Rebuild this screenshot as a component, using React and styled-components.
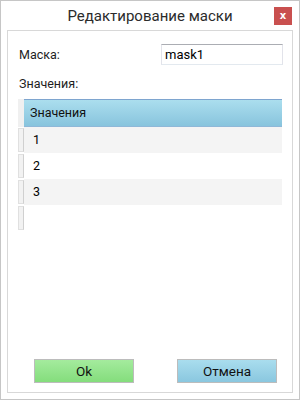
import React from 'react';
import styled, { createGlobalStyle } from 'styled-components';

const GlobalStyle = createGlobalStyle`
  html, body {
    margin: 0;
    padding: 0;
    background: #ffffff;
  }
  body {
    font-family: Roboto, "Noto Sans", sans-serif;
    color: #1e1e1e;
  }
`;

const Window = styled.div`
  box-sizing: border-box;
  width: 300px;
  height: 400px;
  border: 1px solid #c6c6c6;
  background: #ffffff;
  display: flex;
  flex-direction: column;
`;

const TitleBar = styled.div`
  height: 29px;
  display: grid;
  grid-template-columns: 1fr auto 1fr;
  align-items: center;
`;

const Title = styled.div`
  grid-column: 2;
  font-size: 15px;
  color: #2b2b2b;
`;

const CloseButton = styled.div`
  grid-column: 3;
  justify-self: end;
  margin-right: 7px;
  width: 18px;
  height: 18px;
  background: #c9504f;
  color: #ffffff;
  font-family: "DejaVu Sans", sans-serif;
  font-weight: bold;
  font-size: 10px;
  line-height: 18px;
  text-align: center;
`;

const Panel = styled.div`
  flex: 1;
  margin: 0 6px 6px;
  border: 1px solid #d8d8d8;
  display: flex;
  flex-direction: column;
  padding: 13px 9px 9px 10px;
`;

const FieldRow = styled.div`
  display: flex;
  justify-content: space-between;
  align-items: center;
`;

const Label = styled.div`
  font-size: 12.5px;
  padding-left: 1px;
  margin-top: ${p => p.$top || 0}px;
`;

const TextBox = styled.div`
  box-sizing: border-box;
  width: 122px;
  height: 21px;
  border: 1px solid #e2e3ea;
  border-top-color: #abadb3;
  border-bottom-color: #e3e9ef;
  font-size: 13px;
  line-height: 19px;
  padding-left: 3px;
  color: #000;
`;

const Grid = styled.div`
  margin-top: 8px;
  width: 264px;
  display: grid;
  grid-template-columns: 6px 1fr;
`;

const Corner = styled.div`
  background: #f0f0f0;
  height: 28px;
`;

const HeaderCell = styled.div`
  box-sizing: border-box;
  height: 28px;
  border-top: 1px solid #7ea5cf;
  border-bottom: 1px solid #8fb8d8;
  background: linear-gradient(#abdeee, #88c4dd);
  font-size: 12.5px;
  line-height: 26px;
  padding-left: 6px;
  color: #111;
`;

const RowHeader = styled.div`
  box-sizing: border-box;
  height: 24px;
  border: 1px solid #e0e0e0;
  border-right-color: #d0d0d0;
  background: #f2f2f2;
  margin: 1px 0;
`;

const Cell = styled.div`
  height: 26px;
  background: ${p => (p.$alt ? '#f4f4f4' : '#ffffff')};
  font-size: 12.5px;
  line-height: 26px;
  padding-left: 9px;
  color: #000;
`;

const Buttons = styled.div`
  margin-top: auto;
  display: flex;
  justify-content: space-between;
  padding: 0 6px 0 16px;
`;

const Button = styled.div`
  box-sizing: border-box;
  width: 100px;
  height: 24px;
  border: 1px solid #bcbcbc;
  background: ${p =>
    p.$kind === 'ok'
      ? 'linear-gradient(#a4eb9d, #84dd7c)'
      : 'linear-gradient(#a9ddee, #8ac7df)'};
  font-size: 13.5px;
  line-height: 22px;
  text-align: center;
  color: #111;
`;

const values = ['1', '2', '3', ''];

export default function App() {
  return (
    <>
      <GlobalStyle />
      <Window>
        <TitleBar>
          <Title>Редактирование маски</Title>
          <CloseButton>x</CloseButton>
        </TitleBar>
        <Panel>
          <FieldRow>
            <Label>Маска:</Label>
            <TextBox>mask1</TextBox>
          </FieldRow>
          <Label $top={11}>Значения:</Label>
          <Grid>
            <Corner />
            <HeaderCell>Значения</HeaderCell>
            {values.map((v, i) => (
              <React.Fragment key={i}>
                <RowHeader />
                {v ? <Cell $alt={i % 2 === 0}>{v}</Cell> : <Cell />}
              </React.Fragment>
            ))}
          </Grid>
          <Buttons>
            <Button $kind="ok">Ok</Button>
            <Button $kind="cancel">Отмена</Button>
          </Buttons>
        </Panel>
      </Window>
    </>
  );
}
